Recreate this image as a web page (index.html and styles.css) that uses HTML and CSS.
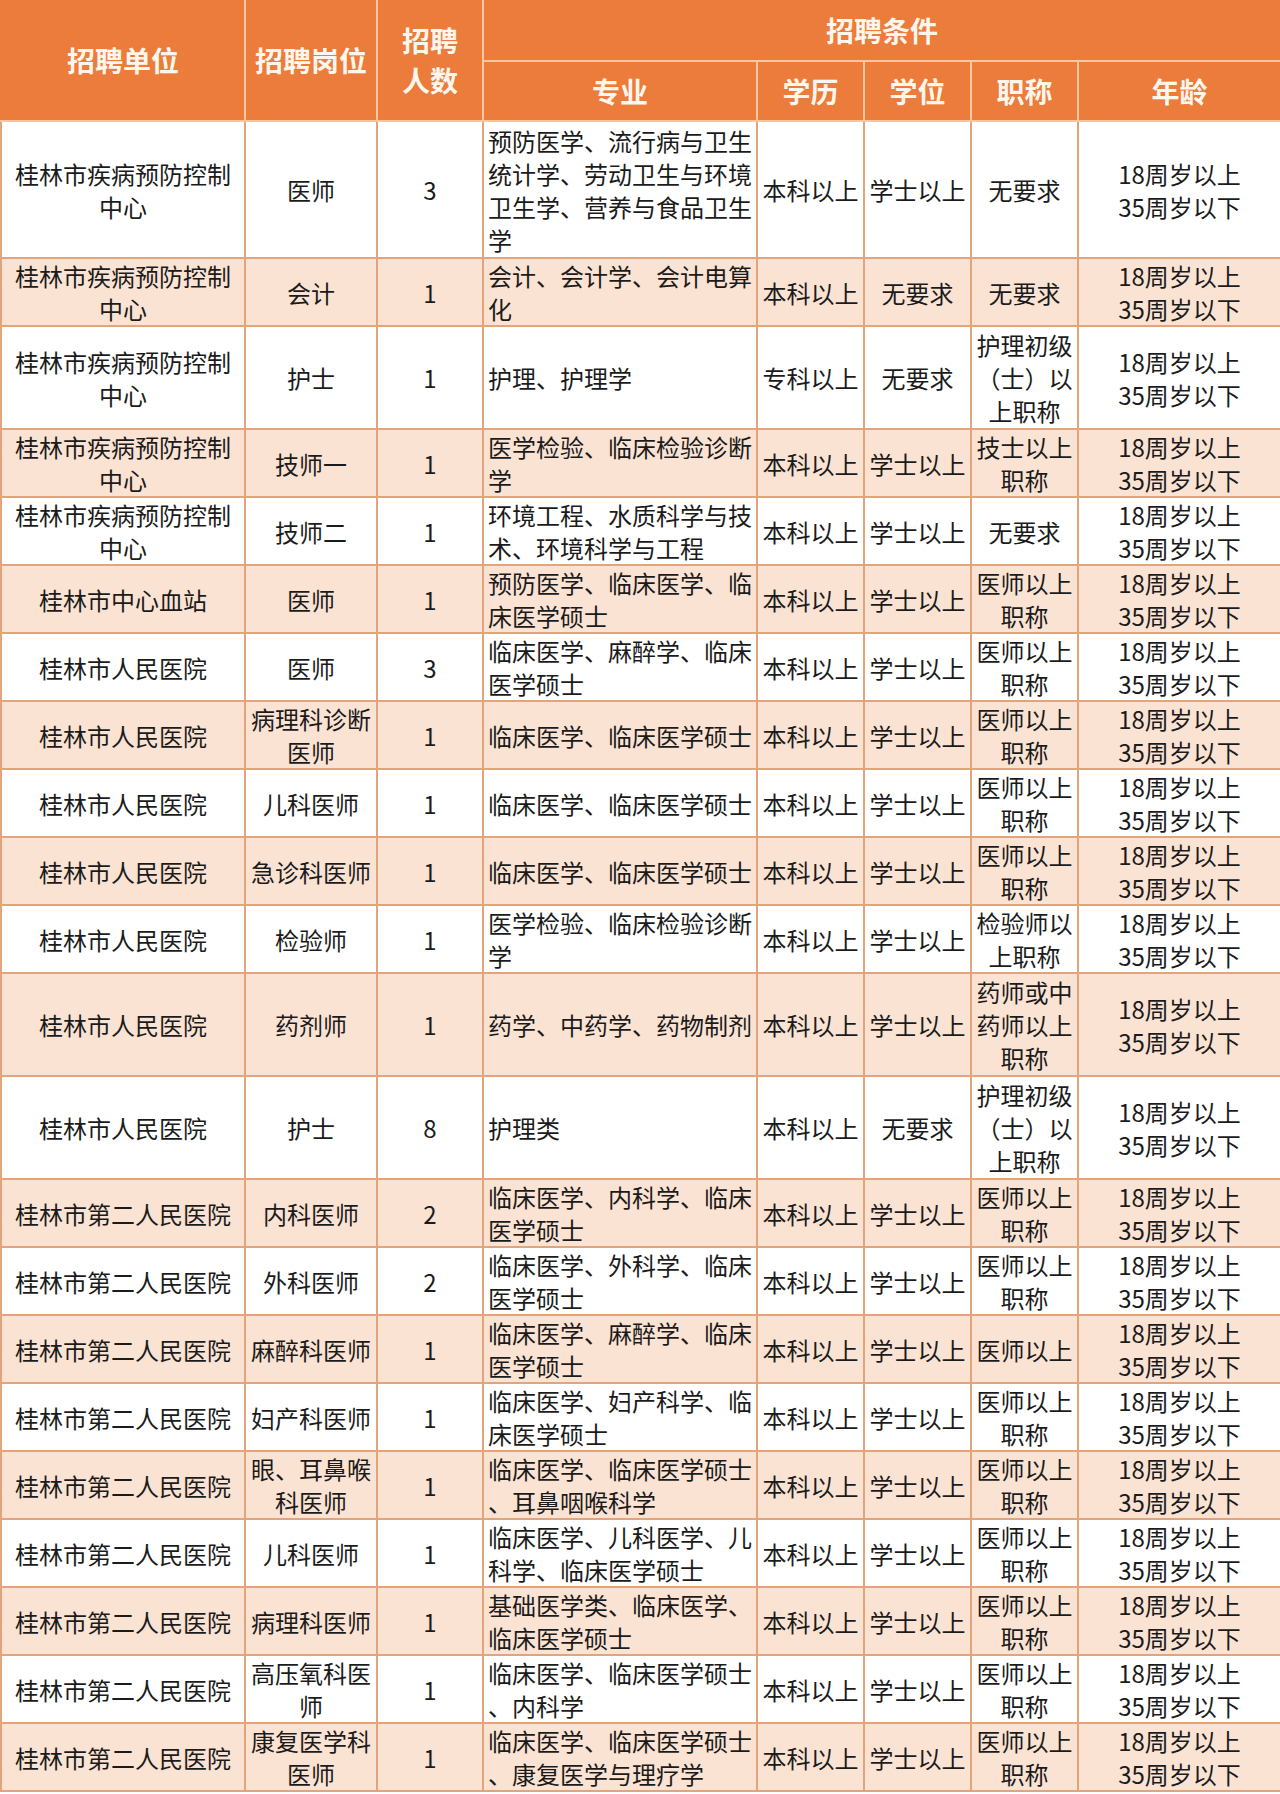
FILE: index.html
```html
<!DOCTYPE html>
<html lang="zh-CN">
<head>
<meta charset="utf-8">
<title>招聘岗位表</title>
<link rel="stylesheet" href="styles.css">
</head>
<body>
<table class="jobs">
  <colgroup>
    <col class="c-unit"><col class="c-post"><col class="c-num"><col class="c-major">
    <col class="c-edu"><col class="c-deg"><col class="c-title"><col class="c-age">
  </colgroup>
  <thead>
    <tr class="hr1">
      <th rowspan="2">招聘单位</th>
      <th rowspan="2">招聘岗位</th>
      <th rowspan="2" class="two">招聘<br>人数</th>
      <th colspan="5">招聘条件</th>
    </tr>
    <tr class="hr2">
      <th>专业</th><th>学历</th><th>学位</th><th>职称</th><th>年龄</th>
    </tr>
  </thead>
  <tbody>
    <tr class="l4"><td>桂林市疾病预防控制<br>中心</td><td>医师</td><td>3</td><td class="major">预防医学、流行病与卫生<br>统计学、劳动卫生与环境<br>卫生学、营养与食品卫生<br>学</td><td>本科以上</td><td>学士以上</td><td>无要求</td><td>18周岁以上<br>35周岁以下</td></tr>
    <tr class="alt"><td>桂林市疾病预防控制<br>中心</td><td>会计</td><td>1</td><td class="major">会计、会计学、会计电算<br>化</td><td>本科以上</td><td>无要求</td><td>无要求</td><td>18周岁以上<br>35周岁以下</td></tr>
    <tr class="l3"><td>桂林市疾病预防控制<br>中心</td><td>护士</td><td>1</td><td class="major">护理、护理学</td><td>专科以上</td><td>无要求</td><td>护理初级<br>（士）以<br>上职称</td><td>18周岁以上<br>35周岁以下</td></tr>
    <tr class="alt"><td>桂林市疾病预防控制<br>中心</td><td>技师一</td><td>1</td><td class="major">医学检验、临床检验诊断<br>学</td><td>本科以上</td><td>学士以上</td><td>技士以上<br>职称</td><td>18周岁以上<br>35周岁以下</td></tr>
    <tr><td>桂林市疾病预防控制<br>中心</td><td>技师二</td><td>1</td><td class="major">环境工程、水质科学与技<br>术、环境科学与工程</td><td>本科以上</td><td>学士以上</td><td>无要求</td><td>18周岁以上<br>35周岁以下</td></tr>
    <tr class="alt"><td>桂林市中心血站</td><td>医师</td><td>1</td><td class="major">预防医学、临床医学、临<br>床医学硕士</td><td>本科以上</td><td>学士以上</td><td>医师以上<br>职称</td><td>18周岁以上<br>35周岁以下</td></tr>
    <tr><td>桂林市人民医院</td><td>医师</td><td>3</td><td class="major">临床医学、麻醉学、临床<br>医学硕士</td><td>本科以上</td><td>学士以上</td><td>医师以上<br>职称</td><td>18周岁以上<br>35周岁以下</td></tr>
    <tr class="alt"><td>桂林市人民医院</td><td>病理科诊断<br>医师</td><td>1</td><td class="major">临床医学、临床医学硕士</td><td>本科以上</td><td>学士以上</td><td>医师以上<br>职称</td><td>18周岁以上<br>35周岁以下</td></tr>
    <tr><td>桂林市人民医院</td><td>儿科医师</td><td>1</td><td class="major">临床医学、临床医学硕士</td><td>本科以上</td><td>学士以上</td><td>医师以上<br>职称</td><td>18周岁以上<br>35周岁以下</td></tr>
    <tr class="alt"><td>桂林市人民医院</td><td>急诊科医师</td><td>1</td><td class="major">临床医学、临床医学硕士</td><td>本科以上</td><td>学士以上</td><td>医师以上<br>职称</td><td>18周岁以上<br>35周岁以下</td></tr>
    <tr><td>桂林市人民医院</td><td>检验师</td><td>1</td><td class="major">医学检验、临床检验诊断<br>学</td><td>本科以上</td><td>学士以上</td><td>检验师以<br>上职称</td><td>18周岁以上<br>35周岁以下</td></tr>
    <tr class="alt l3"><td>桂林市人民医院</td><td>药剂师</td><td>1</td><td class="major">药学、中药学、药物制剂</td><td>本科以上</td><td>学士以上</td><td>药师或中<br>药师以上<br>职称</td><td>18周岁以上<br>35周岁以下</td></tr>
    <tr class="l3"><td>桂林市人民医院</td><td>护士</td><td>8</td><td class="major">护理类</td><td>本科以上</td><td>无要求</td><td>护理初级<br>（士）以<br>上职称</td><td>18周岁以上<br>35周岁以下</td></tr>
    <tr class="alt"><td>桂林市第二人民医院</td><td>内科医师</td><td>2</td><td class="major">临床医学、内科学、临床<br>医学硕士</td><td>本科以上</td><td>学士以上</td><td>医师以上<br>职称</td><td>18周岁以上<br>35周岁以下</td></tr>
    <tr><td>桂林市第二人民医院</td><td>外科医师</td><td>2</td><td class="major">临床医学、外科学、临床<br>医学硕士</td><td>本科以上</td><td>学士以上</td><td>医师以上<br>职称</td><td>18周岁以上<br>35周岁以下</td></tr>
    <tr class="alt"><td>桂林市第二人民医院</td><td>麻醉科医师</td><td>1</td><td class="major">临床医学、麻醉学、临床<br>医学硕士</td><td>本科以上</td><td>学士以上</td><td>医师以上</td><td>18周岁以上<br>35周岁以下</td></tr>
    <tr><td>桂林市第二人民医院</td><td>妇产科医师</td><td>1</td><td class="major">临床医学、妇产科学、临<br>床医学硕士</td><td>本科以上</td><td>学士以上</td><td>医师以上<br>职称</td><td>18周岁以上<br>35周岁以下</td></tr>
    <tr class="alt"><td>桂林市第二人民医院</td><td>眼、耳鼻喉<br>科医师</td><td>1</td><td class="major">临床医学、临床医学硕士<br>、耳鼻咽喉科学</td><td>本科以上</td><td>学士以上</td><td>医师以上<br>职称</td><td>18周岁以上<br>35周岁以下</td></tr>
    <tr><td>桂林市第二人民医院</td><td>儿科医师</td><td>1</td><td class="major">临床医学、儿科医学、儿<br>科学、临床医学硕士</td><td>本科以上</td><td>学士以上</td><td>医师以上<br>职称</td><td>18周岁以上<br>35周岁以下</td></tr>
    <tr class="alt"><td>桂林市第二人民医院</td><td>病理科医师</td><td>1</td><td class="major">基础医学类、临床医学、<br>临床医学硕士</td><td>本科以上</td><td>学士以上</td><td>医师以上<br>职称</td><td>18周岁以上<br>35周岁以下</td></tr>
    <tr><td>桂林市第二人民医院</td><td>高压氧科医<br>师</td><td>1</td><td class="major">临床医学、临床医学硕士<br>、内科学</td><td>本科以上</td><td>学士以上</td><td>医师以上<br>职称</td><td>18周岁以上<br>35周岁以下</td></tr>
    <tr class="alt"><td>桂林市第二人民医院</td><td>康复医学科<br>医师</td><td>1</td><td class="major">临床医学、临床医学硕士<br>、康复医学与理疗学</td><td>本科以上</td><td>学士以上</td><td>医师以上<br>职称</td><td>18周岁以上<br>35周岁以下</td></tr>
  </tbody>
</table>
</body>
</html>
```

FILE: styles.css
```css
html, body {
  margin: 0;
  padding: 0;
  background: #ffffff;
}

.jobs {
  width: 1280px;
  table-layout: fixed;
  border-collapse: collapse;
  font-family: "Noto Sans CJK SC", "Noto Sans", sans-serif;
  color: #1b1b1b;
}

.c-unit { width: 244px; }
.c-post { width: 132px; }
.c-num { width: 106px; }
.c-major { width: 274px; }
.c-edu { width: 107px; }
.c-deg { width: 107px; }
.c-title { width: 107px; }
.c-age { width: 203px; }

.jobs th {
  background: #eb7c3b;
  color: #fff6ee;
  font-size: 28px;
  font-weight: 700;
  line-height: 40px;
  padding: 0;
  border: 2px solid #f6c7a0;
  text-align: center;
  vertical-align: middle;
  white-space: nowrap;
}

.jobs thead tr:first-child th { border-top: 0; }
.jobs th:first-child { border-left-color: #eb7c3b; }

.hr1 th { height: 60px; }
.hr2 th { height: 58px; }
.hr1 th[colspan] { border-right-color: #e99a6a; }
.hr2 th:last-child { border-right-color: #e99a6a; }

.jobs td {
  font-size: 24px;
  font-weight: 400;
  line-height: 33px;
  padding: 0;
  border: 2px solid #e3a47b;
  text-align: center;
  vertical-align: middle;
  white-space: nowrap;
  background: #ffffff;
}

.jobs tr.alt td { background: #fbe3d4; }

.jobs td.major {
  text-align: left;
  padding-left: 4px;
}

.jobs tr.l3 td { height: 101px; }
.jobs tr.l4 td { height: 135px; }
```
